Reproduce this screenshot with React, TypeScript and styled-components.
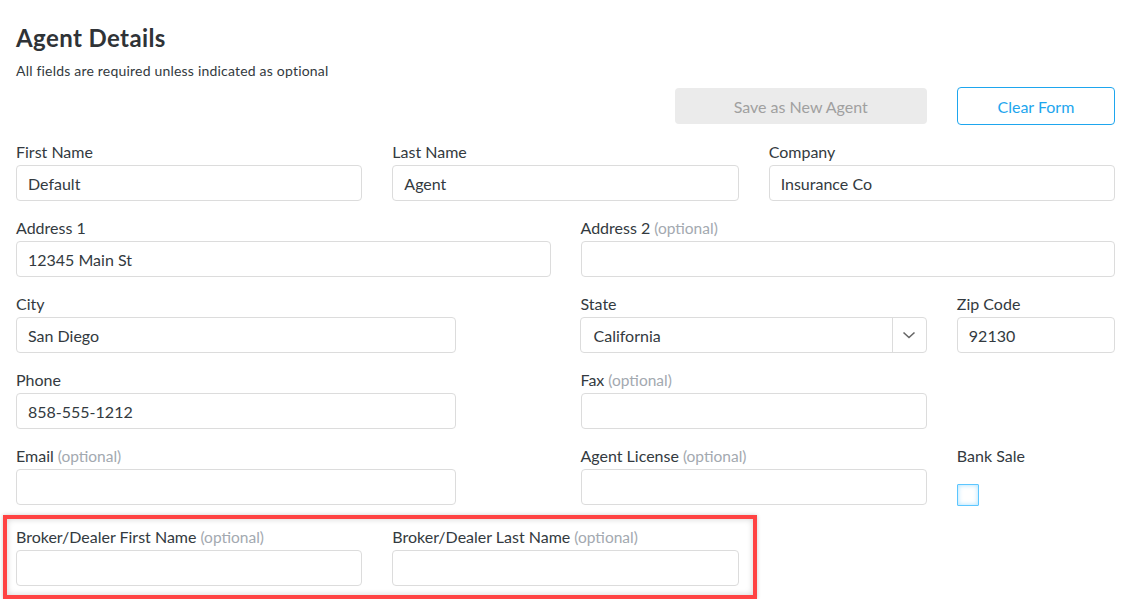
import React from 'react';
import styled, { createGlobalStyle } from 'styled-components';

const GlobalStyle = createGlobalStyle`
  body {
    margin: 0;
    background: #ffffff;
    font-family: Lato, 'Open Sans', Arial, sans-serif;
    color: #333a40;
  }
`;

type Span = { $start?: number; $span: number };

const fields = {
  text: '#333a40',
  border: '#dcdcdc',
  optional: '#a3a9b0',
};

export default function App() {
  return (
    <>
      <GlobalStyle />
      <Page>
        <Title>Agent Details</Title>
        <Hint>All fields are required unless indicated as optional</Hint>

        <Grid>
          <Cell $start={8} $span={3}>
            <SaveButton disabled>Save as New Agent</SaveButton>
          </Cell>
          <Cell $span={2}>
            <ClearButton>Clear Form</ClearButton>
          </Cell>

          <TextField label='First Name' value='Default' $span={4} />
          <TextField label='Last Name' value='Agent' $span={4} />
          <TextField label='Company' value='Insurance Co' $span={4} />

          <TextField label='Address 1' value='12345 Main St' $start={1} $span={6} />
          <TextField label='Address 2' optional $span={6} />

          <TextField label='City' value='San Diego' $start={1} $span={5} />
          <Cell $start={7} $span={4}>
            <Label>State</Label>
            <SelectBox>
              <SelectValue>California</SelectValue>
              <SelectToggle>
                <svg width='14' height='8' viewBox='0 0 14 8'>
                  <polyline points='1.5,1.5 7,6.5 12.5,1.5' fill='none' stroke='#666' strokeWidth='1.6' />
                </svg>
              </SelectToggle>
            </SelectBox>
          </Cell>
          <TextField label='Zip Code' value='92130' $span={2} />

          <TextField label='Phone' value='858-555-1212' $start={1} $span={5} />
          <TextField label='Fax' optional $start={7} $span={4} />

          <TextField label='Email' optional $start={1} $span={5} />
          <TextField label='Agent License' optional $start={7} $span={4} />
          <Cell $span={2}>
            <Label>Bank Sale</Label>
            <CheckBox />
          </Cell>

          <Highlight>
            <HighlightGrid>
              <TextField label='Broker/Dealer First Name' optional $span={4} />
              <TextField label='Broker/Dealer Last Name' optional $span={4} />
            </HighlightGrid>
          </Highlight>
        </Grid>
      </Page>
    </>
  );
}

const TextField = ({
  label,
  value,
  optional,
  $start,
  $span,
}: { label: string; value?: string; optional?: boolean } & Span) => (
  <Cell $start={$start} $span={$span}>
    <Label>
      {label}
      {optional && <Optional> (optional)</Optional>}
    </Label>
    <Input defaultValue={value ?? ''} />
  </Cell>
);

const Page = styled.div`
  width: 1099px;
  padding: 25px 19px 0 16px;
`;

const Title = styled.h1`
  margin: 0;
  font-size: 24px;
  line-height: 26px;
  font-weight: 700;
  letter-spacing: 0.4px;
  color: #2f3337;
`;

const Hint = styled.p`
  margin: 12px 0 0;
  font-size: 14px;
  line-height: 16px;
  letter-spacing: 0.2px;
  color: #333a40;
`;

const Grid = styled.div`
  display: grid;
  grid-template-columns: repeat(12, 1fr);
  column-gap: 30px;
  row-gap: 17px;
  margin-top: 8px;
`;

const HighlightGrid = styled.div`
  display: grid;
  grid-template-columns: repeat(8, 1fr);
  column-gap: 30px;
`;

const Cell = styled.div<Span>`
  grid-column: ${(p) => (p.$start ? `${p.$start} / span ${p.$span}` : `span ${p.$span}`)};
  display: flex;
  flex-direction: column;
  min-width: 0;
`;

const Highlight = styled.div`
  grid-column: 1 / span 8;
  margin: -8px -18px 0 -13px;
  padding: 8px 14px 9px 9px;
  border: 4px solid #ff4343;
  box-shadow: inset 0 0 6px rgba(0, 0, 0, 0.18), 0 0 4px rgba(0, 0, 0, 0.2);
`;

const Label = styled.label`
  font-size: 16px;
  line-height: 20px;
  margin-bottom: 3px;
  color: ${fields.text};
  white-space: nowrap;
`;

const Optional = styled.span`
  color: ${fields.optional};
  font-size: 15.5px;
`;

const Input = styled.input`
  box-sizing: border-box;
  height: 36px;
  width: 100%;
  padding: 0 11px;
  border: 1px solid ${fields.border};
  border-radius: 4px;
  font-family: inherit;
  font-size: 16px;
  color: ${fields.text};
  outline: none;
`;

const SelectBox = styled.div`
  box-sizing: border-box;
  height: 36px;
  display: flex;
  margin-left: -1px;
  border: 1px solid ${fields.border};
  border-radius: 4px;
`;

const SelectValue = styled.div`
  flex: 1;
  display: flex;
  align-items: center;
  padding-left: 13px;
  font-size: 16px;
  color: ${fields.text};
`;

const SelectToggle = styled.div`
  width: 33px;
  display: flex;
  align-items: center;
  justify-content: center;
  border-left: 1px solid ${fields.border};
`;

const ButtonBase = styled.button`
  box-sizing: border-box;
  width: 100%;
  font-family: inherit;
  font-size: 16px;
  border-radius: 4px;
  cursor: pointer;
`;

const SaveButton = styled(ButtonBase)`
  height: 36px;
  margin-top: 1px;
  border: none;
  background: #ebebeb;
  color: #a0a0a0;
`;

const ClearButton = styled(ButtonBase)`
  height: 38px;
  border: 1px solid #1ea6ee;
  background: #ffffff;
  color: #1ea6ee;
`;

const CheckBox = styled.span`
  box-sizing: border-box;
  width: 22px;
  height: 22px;
  margin-top: 15px;
  border: 1.5px solid #5cc6ff;
  border-radius: 1px;
  background: #ffffff;
  box-shadow: inset 0 0 5px rgba(92, 198, 255, 0.55);
`;
